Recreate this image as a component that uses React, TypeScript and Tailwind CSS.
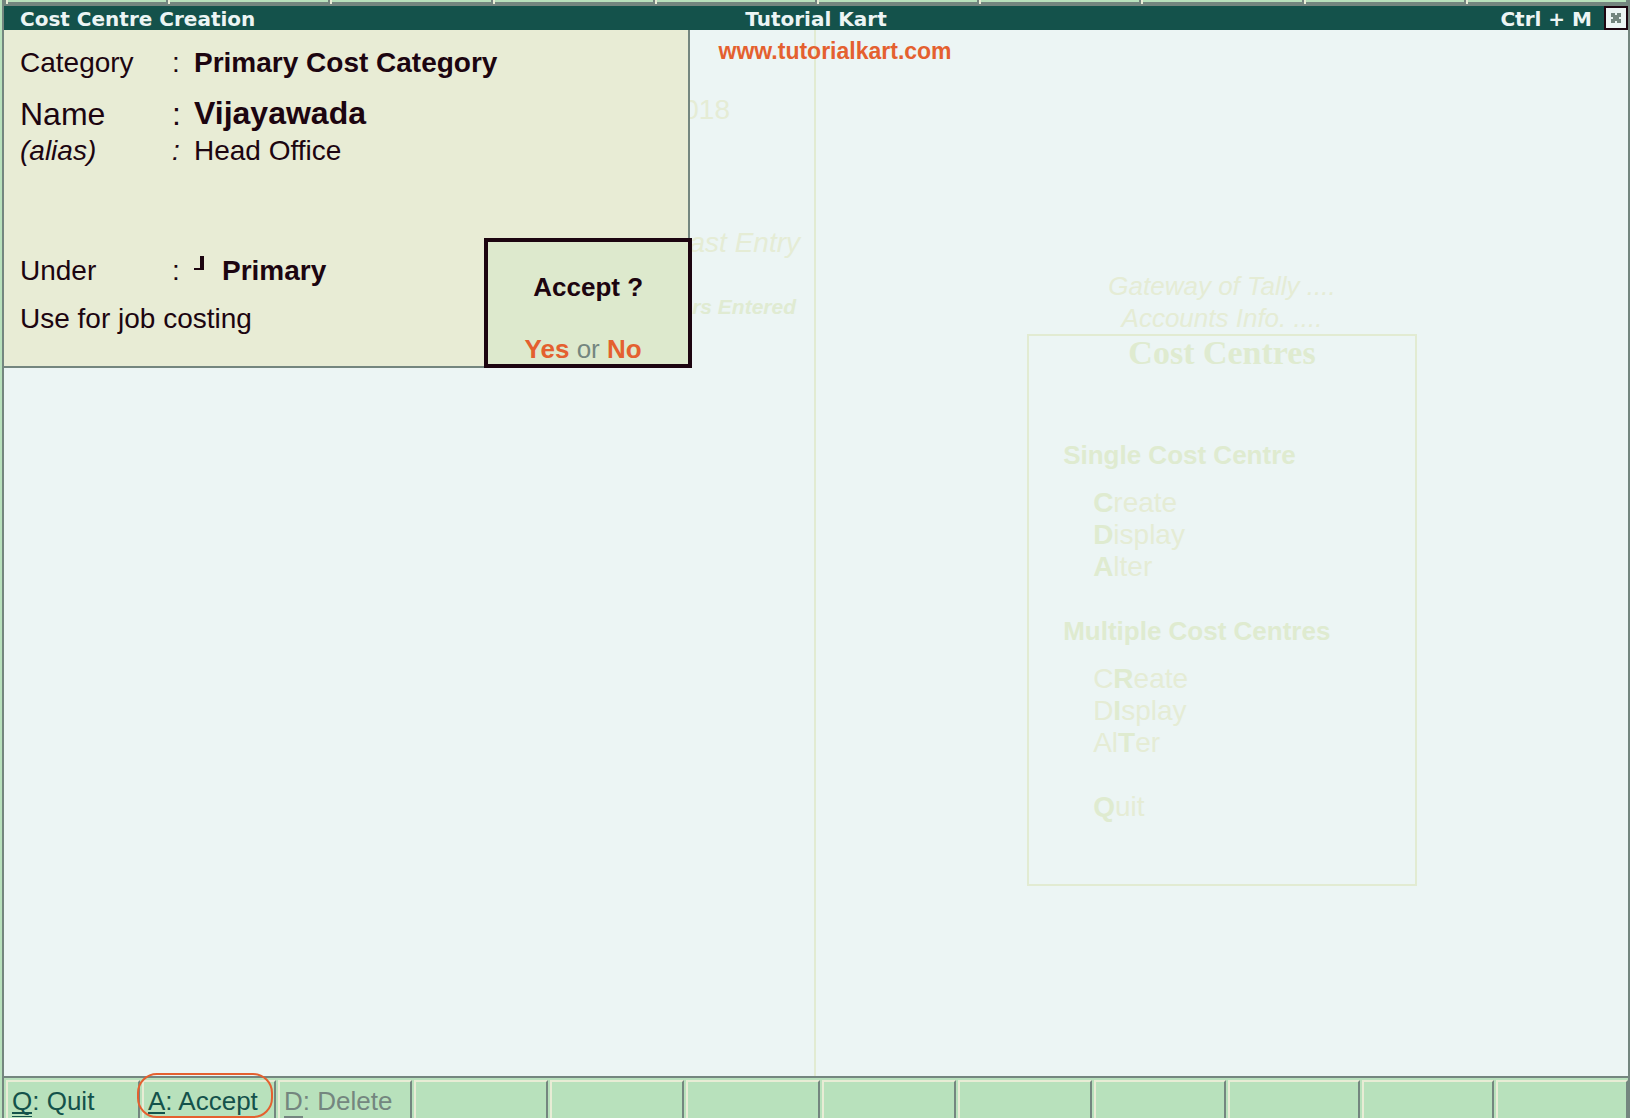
import { useState, type ReactNode } from "react";

const topTabs = Array.from({ length: 10 }, (_, i) => i);
const emptyKeys = Array.from({ length: 9 }, (_, i) => i);

function Field({
  id,
  label,
  value,
  mark,
  rowClass = "h-8 text-[28px]",
  labelClass = "",
  inputClass = "",
}: {
  id: string;
  label: string;
  value: string;
  mark?: ReactNode;
  rowClass?: string;
  labelClass?: string;
  inputClass?: string;
}) {
  const [text, setText] = useState(value);
  return (
    <div className={`grid grid-cols-[152px_22px_1fr] items-center ${rowClass}`}>
      <label htmlFor={id} className={labelClass}>
        {label}
      </label>
      <span className={labelClass}>:</span>
      <div className="flex items-center">
        {mark}
        <input
          id={id}
          type="text"
          value={text}
          onChange={(e) => setText(e.target.value)}
          className={`w-full min-w-0 bg-transparent outline-none ${inputClass}`}
        />
      </div>
    </div>
  );
}

function MenuItem({ children }: { children: ReactNode }) {
  return (
    <button type="button" className="block h-8 text-left text-[#e5ecd5]">
      {children}
    </button>
  );
}

function Hot({ children }: { children: ReactNode }) {
  return <b className="font-bold text-[#dfebd0]">{children}</b>;
}

function FooterKey({ children, className = "" }: { children?: ReactNode; className?: string }) {
  return (
    <button
      type="button"
      className={`relative ml-0.5 flex items-start border-t-2 border-r-2 border-l-2 border-t-[#e8ecd5] border-r-[#74867f] border-l-[#e8ecd5] pt-[3px] pl-1 text-left text-[26px] leading-8 whitespace-pre text-[#14524b] ${className}`}
    >
      {children}
    </button>
  );
}

export default function App() {
  return (
    <div className="flex h-screen min-h-[900px] flex-col overflow-hidden border-r-2 border-l-2 border-r-[#74867f] border-l-[#b8e1bc] bg-[#ecf5f4] font-['Liberation_Sans',Arial,sans-serif] text-[#1c0510]">
      <div className="flex min-h-0 flex-1 flex-col border-l-2 border-[#74867f]">
        <div className="flex h-1 bg-[#74867f] pl-0.5">
          {topTabs.map((tab) => (
            <div key={tab} className="flex-1 border-r-2 border-l-2 border-r-[#74867f] border-l-[#e8ecd5]">
              <div className="h-0.5 bg-[#b8e1bc]" />
            </div>
          ))}
        </div>

        <header className="grid h-[26px] shrink-0 grid-cols-3 border-t-2 border-[#74867f] bg-[#14524b] font-['DejaVu_Sans',Verdana,sans-serif] text-[20px] leading-6 font-bold text-[#ecf5f4]">
          <h1 className="pt-px pl-4">Cost Centre Creation</h1>
          <div className="pt-px text-center">Tutorial Kart</div>
          <div className="flex justify-end gap-3">
            <span className="pt-px">Ctrl + M</span>
            <button
              type="button"
              aria-label="Close"
              className="flex h-6 w-6 items-center justify-center border-2 border-[#1c0510] bg-[#ecf5f4]"
            >
              <svg width="10" height="10" viewBox="0 0 10 10" fill="#74867f" shapeRendering="crispEdges">
                <path d="M0 0H4V2H6V0H10V4H8V6H10V10H6V8H4V10H0V6H2V4H0Z" />
              </svg>
            </button>
          </div>
        </header>

        <main className="relative grid min-h-0 flex-1 grid-cols-2 text-[28px] leading-8">
          <div className="flex flex-col items-end border-r-2 border-[#e2ebd2] pt-16 pr-3.5 whitespace-nowrap text-[#e5ecd5]">
            <span className="mr-[70px]">018</span>
            <span className="mt-[101px] italic">ast Entry</span>
            <span className="mt-8 pr-1 text-[21px] font-bold text-[#e0ebd2] italic">rs Entered</span>
          </div>

          <div className="flex flex-col items-center pt-60">
            <div className="text-center text-[26px] text-[#e5ecd5] italic">
              <div>Gateway of Tally ....</div>
              <div>Accounts Info. ....</div>
            </div>
            <nav className="w-[48%] border-2 border-[#e2ebd2] pb-[61px]">
              <h2 className="pt-px text-center font-['Liberation_Serif',serif] text-[34px] leading-8 font-bold text-[#dfebd0]">
                Cost Centres
              </h2>
              <h3 className="mt-[70px] pl-[34px] text-[26px] font-bold text-[#dfebd0]">Single Cost Centre</h3>
              <div className="mt-4 pl-16">
                <MenuItem>
                  <Hot>C</Hot>reate
                </MenuItem>
                <MenuItem>
                  <Hot>D</Hot>isplay
                </MenuItem>
                <MenuItem>
                  <Hot>A</Hot>lter
                </MenuItem>
              </div>
              <h3 className="mt-8 pl-[34px] text-[26px] font-bold text-[#dfebd0]">Multiple Cost Centres</h3>
              <div className="mt-4 pl-16">
                <MenuItem>
                  C<Hot>R</Hot>eate
                </MenuItem>
                <MenuItem>
                  D<Hot>I</Hot>splay
                </MenuItem>
                <MenuItem>
                  Al<Hot>T</Hot>er
                </MenuItem>
              </div>
              <div className="mt-8 pl-16">
                <MenuItem>
                  <Hot>Q</Hot>uit
                </MenuItem>
              </div>
            </nav>
          </div>

          <form
            onSubmit={(e) => e.preventDefault()}
            className="absolute top-0 left-0 w-[42.25%] border-r-2 border-b-2 border-[#74867f] bg-[#e8ecd5] pt-[17px] pb-[31px] pl-4"
          >
            <Field id="category" label="Category" value="Primary Cost Category" inputClass="font-bold" />
            <Field
              id="name"
              label="Name"
              value="Vijayawada"
              rowClass="mt-4 h-9 text-[32px]"
              inputClass="font-bold"
            />
            <Field id="alias" label="(alias)" value="Head Office" rowClass="mt-1 h-8 text-[28px]" labelClass="italic" />
            <Field
              id="under"
              label="Under"
              value="Primary"
              rowClass="mt-[88px] h-8 text-[28px]"
              inputClass="font-bold"
              mark={
                <svg
                  className="mr-[18px] shrink-0 self-start"
                  width="10"
                  height="16"
                  viewBox="0 0 10 16"
                  fill="#1c0510"
                  shapeRendering="crispEdges"
                >
                  <path d="M6 1H10V15H0V13H6Z" />
                </svg>
              }
            />
            <p className="mt-4">Use for job costing</p>

            <div
              role="dialog"
              aria-label="Accept"
              className="absolute -right-1 -bottom-0.5 w-52 border-4 border-[#1c0510] bg-[#dde9cd] pt-[30px] text-center text-[26px] leading-[30px]"
            >
              <p className="font-bold">Accept ?</p>
              <div className="mt-8 pr-2.5 text-[#74867f]">
                <button type="button" className="font-bold text-[#e4602f]">
                  Yes
                </button>{" "}
                or{" "}
                <button type="button" className="font-bold text-[#e4602f]">
                  No
                </button>
              </div>
            </div>
          </form>

          <a
            href="#site"
            className="absolute top-[5px] left-[44%] text-[23px] font-bold text-[#e4602f]"
          >
            www.tutorialkart.com
          </a>
        </main>

        <footer className="grid h-[42px] shrink-0 grid-cols-[repeat(8,136fr)_repeat(4,134fr)] border-t-2 border-[#74867f] bg-[#b8e1bc] pt-0.5">
          <FooterKey>
            <span className="flex h-8 flex-col">
              <span className="h-[29px] border-b-2 border-[#14524b]">Q</span>
              <span className="mt-0.5 h-0.5 bg-[#14524b]" />
            </span>
            : Quit
          </FooterKey>
          <FooterKey>
            <span className="h-[29px] border-b-2 border-[#14524b]">A</span>: Accept
            <span className="absolute -top-[9px] -left-[7px] h-[45px] w-[136px] rounded-[20px] border-2 border-[#e4602f]" />
          </FooterKey>
          <FooterKey className="text-[#74867f]">
            <span className="h-[33px] border-b-2 border-[#74867f]">D</span>: Delete
          </FooterKey>
          {emptyKeys.map((key) => (
            <FooterKey key={key} />
          ))}
        </footer>
      </div>
    </div>
  );
}
